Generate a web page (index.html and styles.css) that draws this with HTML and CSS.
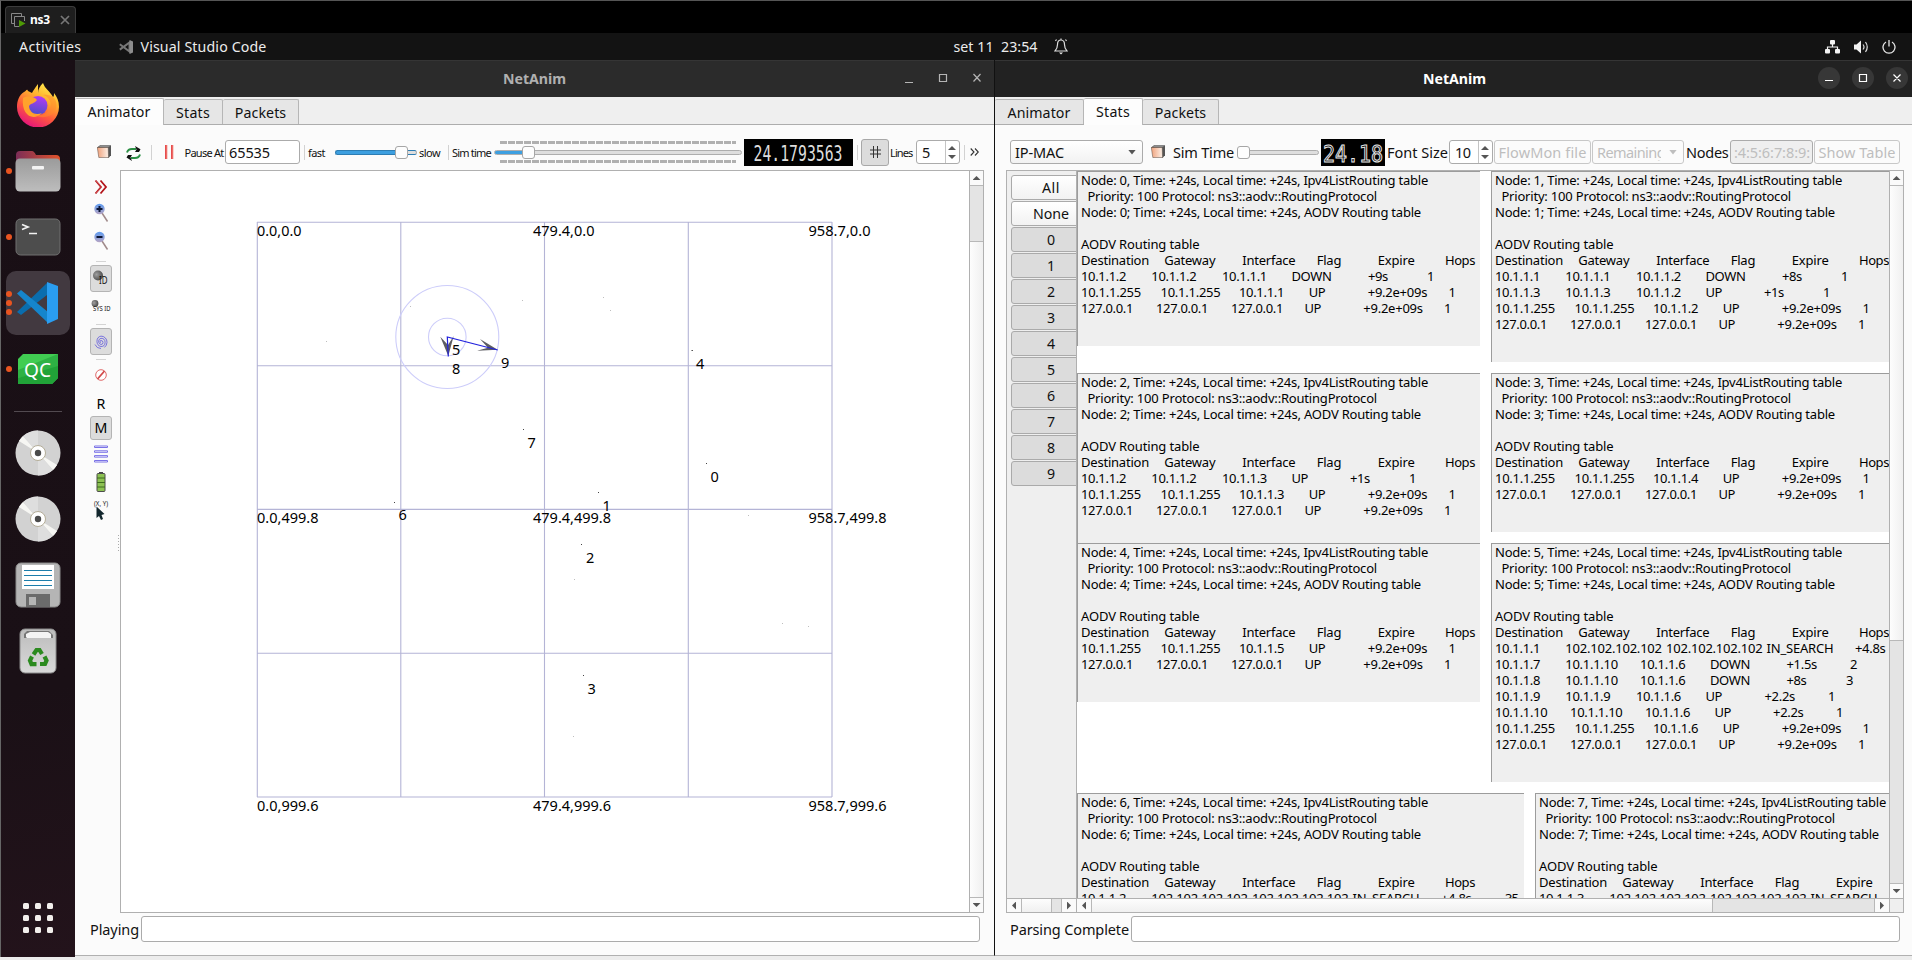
FILE: index.html
```html
<!DOCTYPE html>
<html lang="en">
<head>
<meta charset="utf-8">
<title>ns3</title>
<link rel="stylesheet" href="styles.css">
</head>
<body>
<svg class="defs" width="0" height="0">
  <defs>
    <linearGradient id="ff" x1="0.8" y1="0" x2="0.3" y2="1"><stop offset="0" stop-color="#fff44f"/><stop offset=".35" stop-color="#ffb02e"/><stop offset=".65" stop-color="#ff5a3c"/><stop offset="1" stop-color="#e3127e"/></linearGradient>
    <linearGradient id="ffp" x1="0.6" y1="0" x2="0.4" y2="1"><stop offset="0" stop-color="#b53af5"/><stop offset="1" stop-color="#4a4fc8"/></linearGradient>
    <linearGradient id="fold" x1="0" y1="0" x2="1" y2="0"><stop offset="0" stop-color="#7c2d57"/><stop offset="1" stop-color="#e2532b"/></linearGradient>
    <linearGradient id="grey" x1="0" y1="0" x2="0" y2="1"><stop offset="0" stop-color="#9b9b9b"/><stop offset="1" stop-color="#bdbdbd"/></linearGradient>
    <linearGradient id="bin" x1="0" y1="0" x2="0" y2="1"><stop offset="0" stop-color="#bcbcbc"/><stop offset="1" stop-color="#d9d9d9"/></linearGradient>
    <linearGradient id="peach" x1="0" y1="0" x2="1" y2="0"><stop offset="0" stop-color="#f0a27c"/><stop offset="1" stop-color="#fdf1e8"/></linearGradient>
    <radialGradient id="ball" cx=".35" cy=".4" r=".7"><stop offset="0" stop-color="#a0a0a0"/><stop offset="1" stop-color="#444"/></radialGradient>
    <linearGradient id="lens" x1="0" y1="0" x2="0" y2="1"><stop offset="0" stop-color="#5d9bf0"/><stop offset="1" stop-color="#b5a4c4"/></linearGradient>
    <symbol id="book" viewBox="0 0 14 14"><path d="M0 2.500 3 .3h11v10L11.500 13z" fill="#555"/><path d="M1 2h10.500L14 .5H4z" fill="#8d8d8d"/><path d="M.3 2.500h10.900l.3 10H1.800z" fill="url(#peach)" stroke="#5a4a40" stroke-width=".5"/></symbol>
    <symbol id="disc" viewBox="0 0 46 46"><circle cx="23" cy="23" r="22.500" fill="#d2d2d2"/><path d="M23 23 4 11a22.500 22.500 0 0 1 4-5zM23 23l19 12a22.500 22.500 0 0 1-4 5z" fill="#f6f6f3"/><path d="M23 23 8 6A22.500 22.500 0 0 1 23 .5zM23 23l15 17a22.500 22.500 0 0 1-15 5.500z" fill="#dedede"/><circle cx="23" cy="23" r="7.500" fill="#fff" stroke="#b4ad98"/><circle cx="23" cy="23" r="3.200" fill="#4a4a4a"/></symbol>
  </defs>
</svg>
<div class="screen">
  <header class="vmbar">
    <div class="vmtab">
      <svg width="15" height="15" viewBox="0 0 15 15"><path d="M3.500 10.500H.5V.5h10V3M8 13.500H3.500v-10h10V8" fill="none" stroke="#888"/><path d="M8 7v7l6.500-3.500z" fill="#4e9a06"/></svg>
      <b data-w="20">ns3</b>
      <svg width="10" height="10" viewBox="0 0 10 10"><path d="M1 1l8 8M9 1 1 9" stroke="#777" stroke-width="1.700"/></svg>
    </div>
  </header>
  <nav class="panel">
    <span class="activities" data-w="62.500">Activities</span>
    <svg class="codeicon" width="15" height="14" viewBox="0 0 15 14"><path d="M.8 9.600 10.500 2.500v9L.8 4.200" fill="none" stroke="#777" stroke-width="2"/><path d="M10.500 0 14 1.500v11L10.500 14z" fill="#8d8d8d"/></svg>
    <span class="appname" data-w="126">Visual Studio Code</span>
    <span class="clock" data-w="84">set 11  23:54</span>
    <svg class="bell" width="14" height="17" viewBox="0 0 14 17"><path d="M7 2C4.500 2 3.500 4 3.500 6.500c0 3.500-1 5-2.500 6.500h12c-1.500-1.500-2.500-3-2.500-6.500C10.500 4 9.500 2 7 2zM7 .5V2M1.500 3l1-1.500M12.500 3l-1-1.500" fill="none" stroke="#ddd" stroke-width="1.200"/><path d="M5 14.500h4L7 16.500z" fill="#eee"/></svg>
    <div class="tray">
      <svg width="15" height="14" viewBox="0 0 15 14"><path d="M7.500 4v3M2.500 10V7h10v3" fill="none" stroke="#f2f2f2" stroke-width="1.200"/><rect x="5" y="0" width="5" height="4.500" rx="1" fill="#f2f2f2"/><rect x="0" y="9" width="5" height="4.500" rx="1" fill="#f2f2f2"/><rect x="10" y="9" width="5" height="4.500" rx="1" fill="#f2f2f2"/></svg>
      <svg width="15" height="14" viewBox="0 0 15 14"><path d="M0 4.500h2.500L7 .5v13L2.500 9.500H0z" fill="#f2f2f2"/><path d="M9 4.500q2 2.500 0 5M11.500 2q3.500 5 0 10" fill="none" stroke="#ddd" stroke-width="1.200"/></svg>
      <svg width="14" height="14" viewBox="0 0 14 14"><path d="M4 2a6 6 0 1 0 6 0M7 0v6.500" fill="none" stroke="#e8e8e8" stroke-width="1.300"/></svg>
    </div>
  </nav>
  <main class="desktop">
    <aside class="dock">
      <div class="app"><svg width="44" height="44" viewBox="0 0 44 44"><path d="M22 1C19 5 17 8 16 10l-4-2C11 5 10 8 8 9 3 12 1 18 1 24a21 20.500 0 0 0 42 0c0-6-2-10-5-14 0 2 0 3-1 4C34 8 29 6 27 0c-3 3-5 6-5 10z" fill="url(#ff)"/><circle cx="22" cy="22.500" r="9.500" fill="url(#ffp)"/><path d="M7 15c5-3 12-1 14 2-3 4-6 3-8 6 0 6 6 10 13 7-9 9-21 2-19-15z" fill="#ffa22c"/><path d="M13 23c0 8 9 12 17 7 8-5 5-16-3-18 12-2 16 8 12 16-5 9-24 9-26-5z" fill="#ff8a2e" opacity=".55"/></svg></div>
      <div class="app"><i class="dot"></i><svg width="46" height="42" viewBox="0 0 46 42"><path d="M1 20V5q0-4 4-4h12q2 0 4 4h20q4 0 4 4v12z" fill="url(#fold)"/><rect x=".5" y="8.500" width="45" height="33" rx="4.500" fill="url(#grey)"/><rect x="17" y="16" width="12" height="3.500" rx="1" fill="#f4f4f4"/></svg></div>
      <div class="app"><i class="dot"></i><svg width="46" height="38" viewBox="0 0 46 38"><rect x="1" y="1" width="44" height="36" rx="4.500" fill="#4d4d4d" stroke="#717171"/><path d="M7 6.500 13 9 7 11.500M14 15.500h8" fill="none" stroke="#f2f2f2" stroke-width="1.700"/></svg></div>
      <div class="app active"><i class="dot three"></i><svg width="44" height="44" viewBox="0 0 44 44"><path d="M1 31 31 2v12L5 34z" fill="#0a6dae"/><path d="M1 12.500 5 9l27 22v11z" fill="#1585cc"/><path d="M31 1 42 5v33L31 43z" fill="#2a9df0"/></svg></div>
      <div class="app"><i class="dot"></i><svg width="40" height="30" viewBox="0 0 40 30"><path d="M5 0h35v24l-6 6H0V5z" fill="#41cd52"/><path d="M40 0v14L0 24V16z" fill="#2eb244"/><path d="M0 24 40 12v12l-6 6H0z" fill="#21a338"/><text x="6" y="23" class="qc" textLength="27" lengthAdjust="spacingAndGlyphs">QC</text></svg></div>
      <hr>
      <div class="app"><svg width="46" height="46"><use href="#disc"/></svg></div>
      <div class="app"><svg width="46" height="46"><use href="#disc"/></svg></div>
      <div class="app"><svg width="46" height="46" viewBox="0 0 46 46"><rect x="1" y="1" width="44" height="44" rx="5" fill="#b5b5b5" stroke="#8b8b8b"/><rect x="7" y="3" width="32" height="24" fill="#fff"/><path d="M9 8.500h28M9 13.500h28M9 18.500h28M9 23.500h28" stroke="#1c7dab" stroke-width="1.200"/><rect x="11" y="32" width="24" height="13" fill="#6b6b6b"/><rect x="14" y="35" width="7" height="8" fill="#b5b5b5"/></svg></div>
      <div class="app"><svg width="38" height="46" viewBox="0 0 38 46"><rect x="1" y="1" width="36" height="44" rx="5" fill="url(#bin)" stroke="#8b8b8b"/><path d="M5 10V6l3-3h22l4 4v3z" fill="#777"/><path d="M7 9V6l4-2h18l3 2v4H8z" fill="#f4f4f4"/><g fill="none" stroke="#2b8a1f" stroke-width="4.200"><path d="m14.500 26.500 3-4.500h3l2.500 4M25.500 28.500l2 4-1.500 3.500h-5M17.500 36.200h-5L11 32.500l2-4"/></g></svg></div>
      <div class="grow"></div>
      <div class="apps"><i></i><i></i><i></i><i></i><i></i><i></i><i></i><i></i><i></i></div>
    </aside>

    <section class="win win-left">
      <div class="titlebar"><b data-w="63">NetAnim</b>
        <svg class="ctl" width="76" height="12" viewBox="0 0 76 12"><path d="M1 10.500h8M35.500 2.500h7v7h-7zM69.500 2l7 7.500M76.500 2l-7 7.500" fill="none" stroke="#b5b5b5" stroke-width="1.200"/></svg>
      </div>
      <div class="tabs"><span class="tab on t1"><em data-w="63">Animator</em></span><span class="tab t2"><em data-w="34">Stats</em></span><span class="tab t3"><em data-w="51.500">Packets</em></span></div>
      <div class="toolbar tb-left">
        <svg width="14" height="14"><use href="#book"/></svg>
        <svg class="low" width="15" height="15" viewBox="0 0 15 15"><path d="M1 6.500Q2 3 6 3h4M14 8.500Q13 12 9 12H5" fill="none" stroke="#2c8f45" stroke-width="2"/><path d="M9 0l5.500 3.200L13 6H9l1.500-2.500zM6 15 .5 11.500 2 9h4l-1.500 2.500z" fill="#111"/></svg>
        <i class="sep"></i>
        <svg width="12" height="14" viewBox="0 0 12 14"><path d="M3 0v14M9 0v14" stroke="#e02222" stroke-width="1.600"/><path d="M4 0v14M10 0v14" stroke="#f79a90" stroke-width=".8"/></svg>
        <small data-w="39">Pause At</small>
        <span class="field"><em data-w="41">65535</em></span>
        <i class="sep"></i>
        <small data-w="17">fast</small>
        <div class="slider s1"><b></b><i></i></div>
        <small data-w="21">slow</small>
        <i class="sep"></i>
        <small data-w="39">Sim time</small>
        <div class="slider s2"><b></b><i></i></div>
        <div class="lcd lcd1"><svg width="109" height="27"><text transform="translate(9.500 22) scale(1 1.700)" textLength="89" lengthAdjust="spacingAndGlyphs">24.1793563</text></svg></div>
        <i class="sep"></i>
        <span class="hash"><svg width="11" height="12" viewBox="0 0 11 12"><path d="M3.500 0v12M7.500 0v12M0 4h11M0 8h11" stroke="#333" stroke-width="1"/></svg></span>
        <small data-w="22.500">Lines</small>
        <span class="spin"><em>5</em><u></u></span>
        <i class="sep"></i>
        <svg width="9" height="8" viewBox="0 0 9 8"><path d="M.7.500 4 4 .7 7.500M5 .5 8.300 4 5 7.500" fill="none" stroke="#333" stroke-width="1.100"/></svg>
      </div>
      <div class="viewer">
        <div class="tools">
          <svg class="k1" width="14" height="14" viewBox="0 0 14 14"><path d="M1.500.500 7 7l-5.500 6.500M6.500.5 12 7l-5.500 6.500" fill="none" stroke="#b3141a" stroke-width="1.800"/><path d="M2 1l5.500 6L2 13" fill="none" stroke="#e88" stroke-width=".5"/></svg>
          <svg class="k2" width="16" height="20" viewBox="0 0 16 20"><path d="m9 10 5.500 8.500" stroke="#a08a8a" stroke-width="1.500"/><circle cx="6.500" cy="6" r="5.200" fill="url(#lens)"/><path d="M3.500 6h6M6.500 3v6" stroke="#0b1533" stroke-width="2"/></svg>
          <svg class="k3" width="16" height="20" viewBox="0 0 16 20"><path d="m9 10 5.500 8.500" stroke="#a08a8a" stroke-width="1.500"/><circle cx="6.500" cy="6" r="5.200" fill="url(#lens)"/><path d="M3.500 6h6" stroke="#0b1533" stroke-width="2"/></svg>
          <i class="hs k4"></i>
          <span class="btn k5"><svg width="20" height="20" viewBox="0 0 20 20"><circle cx="7" cy="6.500" r="5" fill="url(#ball)"/><text x="8" y="15" font-size="10" textLength="8.500" lengthAdjust="spacingAndGlyphs">ID</text></svg></span>
          <svg class="k6" width="22" height="20" viewBox="0 0 22 20"><circle cx="5" cy="6.500" r="3.400" fill="url(#ball)"/><text x="3" y="13.500" font-size="7.800" textLength="17.500" lengthAdjust="spacingAndGlyphs">SYS ID</text></svg>
          <i class="hs k7"></i>
          <span class="btn k8"><svg width="14" height="16" viewBox="0 0 14 16"><path d="M7 8.500a1 1 0 0 1 0-2 2 2 0 0 1 0 4 3.200 3.200 0 0 1 0-6.200 4 4 0 0 1 0 8.200 5 5.300 0 0 1 0-10.400 6 6 0 0 1 6 6.300 7 7 0 0 1-2.500 5M1 10.500a6.500 6.500 0 0 0 6 4" fill="none" stroke="#5f58dc" stroke-width=".8"/></svg></span>
          <i class="hs k9"></i>
          <svg class="k10" width="14" height="16" viewBox="0 0 14 16"><circle cx="7" cy="8" r="5.300" fill="#fff" stroke="#e06a6a"/><path d="M3.500 12 10.500 4" stroke="#d24a4a" stroke-width="1.800"/></svg>
          <span class="k11">R</span>
          <span class="btn k12">M</span>
          <svg class="k13" width="14" height="18" viewBox="0 0 14 18"><path d="M.5 1h13v1.500H.5zM.5 5.800h13v1.500H.5zM.5 10.600h13v1.500H.5zM.5 15.500h13V17H.5z" fill="#fff" stroke="#7a72e6"/></svg>
          <svg class="k14" width="10" height="20" viewBox="0 0 10 20"><path d="M3 0h4v2H3z" fill="#444"/><rect x="1" y="1.500" width="8" height="18" rx="1" fill="#8cc152" stroke="#4d4d4d"/><path d="M1 6h8M1 10.500h8M1 15h8" stroke="#3d6b1f"/></svg>
          <svg class="k15" width="18" height="22" viewBox="0 0 18 22"><text x="2" y="7" font-size="7.800" textLength="14" lengthAdjust="spacingAndGlyphs">(X, Y)</text><path d="M4.500 7.500v11.500l2.500-2 2 4 2-1-1.500-4 3-1z" fill="#12262d"/></svg>
        </div>
        <i class="grip"></i>
        <div class="scene">
          <svg width="848" height="741" viewBox="121 171 848 741">
            <path d="M257.300 222V797M400.800 222V797M544.500 222V797M688.300 222V797M832 222V797M257 222.200H832M257 365.800H832M257 509.400H832M257 653.200H832M257 797H832" stroke="#b4b4d6" stroke-width="1.100" fill="none"/>
            <g fill="none" stroke="#cdcdfa" stroke-width="1.100"><circle cx="447.300" cy="337" r="51.500"/><circle cx="447.300" cy="337" r="18.800"/></g>
            <path d="M440.300 336.700 448.300 356 453.700 336 448 345zM480 339l17.700 10.700-20.700 1 11-3z" fill="#5c5c62"/>
            <path d="M497.700 350 447.300 337l1 19.500" fill="none" stroke="#2222dd" stroke-width="1.200"/>
            <g fill="#444"><path d="M691.500 350h1.400v1h-1.400zM523 429h1v1h-1zM706 463h1v1h-1zM598 492h1v1h-1zM394 502h1v1h-1zM581 544h1v1h-1zM583 675h1v1h-1z"/><path opacity=".35" d="M410 306h1v1h-1zM522 300h1v1h-1zM603 297h1v1h-1zM610 310h1v1h-1zM326 341h1v1h-1zM748 515h1v1h-1zM574 579h1v1h-1zM782 623h1v1h-1zM808 626h1v1h-1zM573 736h1v1h-1z"/></g>
            <g class="lbl">
              <text x="257" y="236" textLength="44.500" lengthAdjust="spacingAndGlyphs">0.0,0.0</text><text x="533" y="236" textLength="61.500" lengthAdjust="spacingAndGlyphs">479.4,0.0</text><text x="808.500" y="236" textLength="62" lengthAdjust="spacingAndGlyphs">958.7,0.0</text>
              <text x="257" y="523" textLength="61.500" lengthAdjust="spacingAndGlyphs">0.0,499.8</text><text x="533" y="523" textLength="78" lengthAdjust="spacingAndGlyphs">479.4,499.8</text><text x="808.500" y="523" textLength="78" lengthAdjust="spacingAndGlyphs">958.7,499.8</text>
              <text x="257" y="811" textLength="61.500" lengthAdjust="spacingAndGlyphs">0.0,999.6</text><text x="533" y="811" textLength="78" lengthAdjust="spacingAndGlyphs">479.4,999.6</text><text x="808.500" y="811" textLength="78" lengthAdjust="spacingAndGlyphs">958.7,999.6</text>
              <text x="452" y="355">5</text><text x="452" y="374">8</text><text x="501" y="368">9</text><text x="696" y="369">4</text><text x="527.500" y="448">7</text><text x="710.500" y="482">0</text><text x="602.500" y="511">1</text><text x="398.500" y="520">6</text><text x="586" y="563">2</text><text x="587.500" y="694">3</text>
            </g>
          </svg>
        </div>
        <div class="vbar"><i class="up"></i><div class="groove g56"></div><div class="knob"></div><i class="down"></i></div>
      </div>
      <div class="status"><em data-w="49">Playing</em><span></span></div>
    </section>

    <section class="win win-right">
      <div class="titlebar"><b data-w="63">NetAnim</b>
        <svg class="ctl" width="90" height="22" viewBox="0 0 90 22"><g fill="#373737"><circle cx="11" cy="11" r="11"/><circle cx="45" cy="11" r="11"/><circle cx="79" cy="11" r="11"/></g><path d="M7 13.500h8M41.500 7.500h7v7h-7zM75.500 7.500l7 7M82.500 7.500l-7 7" fill="none" stroke="#fff" stroke-width="1.200"/></svg>
      </div>
      <div class="tabs"><span class="tab t1"><em data-w="63">Animator</em></span><span class="tab on t2"><em data-w="34">Stats</em></span><span class="tab t3"><em data-w="51.500">Packets</em></span></div>
      <div class="toolbar tb-right">
        <span class="combo"><em data-w="49">IP-MAC</em><u></u></span>
        <svg width="14" height="14"><use href="#book"/></svg>
        <em data-w="61">Sim Time</em>
        <div class="slider s3"><b></b><i></i></div>
        <div class="lcd lcd2"><svg width="64" height="27"><text transform="translate(2 23) scale(1 1.800)" textLength="60" lengthAdjust="spacingAndGlyphs">24.18</text></svg></div>
        <em data-w="61">Font Size</em>
        <span class="spin"><em data-w="15.500">10</em><u></u></span>
        <span class="pbtn off"><em data-w="88">FlowMon file</em></span>
        <span class="combo off"><em class="cut"><em data-w="68">Remaining</em></em><u></u></span>
        <em data-w="42.500">Nodes</em>
        <span class="field off"><em data-w="76">:4:5:6:7:8:9:</em></span>
        <span class="pbtn off"><em data-w="77">Show Table</em></span>
      </div>
      <div class="viewer">
        <div class="list">
          <div class="nodes"><span class="n lite"><em data-w="18">All</em></span><span class="n lite"><em data-w="36">None</em></span><span class="n">0</span><span class="n">1</span><span class="n">2</span><span class="n">3</span><span class="n">4</span><span class="n">5</span><span class="n">6</span><span class="n">7</span><span class="n">8</span><span class="n">9</span></div>
          <div class="hbar"><i class="lt"></i><div class="knob"></div><div class="groove g10"></div><i class="rt"></i></div>
        </div>
        <div class="stats">
          <div class="sheet">
            <div class="col c1" id="col-a"></div>
            <div class="col c2" id="col-b"></div>
          </div>
          <div class="hbar"><i class="lt"></i><div class="knob"></div><div class="groove g163"></div><i class="rt"></i></div>
        </div>
        <div class="vside">
          <div class="vbar"><i class="up"></i><div class="knob"></div><div class="groove g243"></div><i class="down"></i></div>
          <div class="corner"></div>
        </div>
      </div>
      <div class="status"><em data-w="119">Parsing Complete</em><span></span></div>
    </section>
  </main>
</div>
<script src="main.js"></script>
</body>
</html>
```

FILE: styles.css
```css
* { box-sizing: border-box; }
body { margin: 0; width: 1912px; height: 960px; overflow: hidden; background: #ececec; font: 14.2px/18px "Noto Sans", "Open Sans", sans-serif; color: #111; }
em { font-style: normal; white-space: pre; }
svg { display: block; }
small { font-size: 11px; white-space: pre; position: relative; top: 1px; }
.defs { position: absolute; }
.screen { width: 1912px; height: 957px; display: flex; flex-direction: column; border-top: 1px solid #555; border-left: 1px solid #666; }
.vmbar { height: 32px; background: #000; padding: 5px 0 0 4px; flex: none; }
.vmtab { width: 71px; height: 27px; background: #1e1e1e; border: 1px solid #3c3c3c; border-bottom: 0; border-radius: 4px 4px 0 0; display: flex; align-items: center; padding: 0 5px; color: #fff; }
.vmtab b { font-size: 12px; margin: 0 10px 0 4px; white-space: pre; }
.panel { height: 27px; background: #131313; color: #ececec; display: flex; align-items: center; flex: none; white-space: pre; }
.activities { margin-left: 18px; }
.codeicon { margin: 0 7px 0 37px; }
.clock { margin-left: 687px; }
.bell { margin-left: 17px; }
.tray { margin-left: auto; margin-right: 16px; display: flex; gap: 13.5px; }
.desktop { flex: 1; display: flex; min-height: 0; }

.dock { width: 74px; background: linear-gradient(170deg, #190f15, #1a1016 70%, #23131b); display: flex; flex-direction: column; padding-top: 13px; align-items: center; flex: none; }
.app { width: 64px; height: 64px; margin: 0 0 2px 0; display: flex; align-items: center; justify-content: center; position: relative; border-radius: 10px; flex: none; }
.app.active { background: #423940; }
.dot { position: absolute; left: 0; top: 29px; width: 6px; height: 6px; border-radius: 3px; background: #e95420; }
.dot.three { top: 20px; box-shadow: 0 9px 0 #e95420, 0 18px 0 #e95420; }
.dock hr { width: 48px; height: 1px; border: 0; background: #524a50; margin: 8px 0 9px; flex: none; }
.qc { font: 19px "Noto Sans", sans-serif; fill: #fff; }
.grow { flex: 1; }
.apps { display: grid; grid-template-columns: repeat(3, 6px); gap: 6px; margin-bottom: 24px; }
.apps i { width: 6px; height: 6px; border-radius: 1.500px; background: #f2efec; }

.win { display: flex; flex-direction: column; background: #fbfbfb; flex: none; min-height: 0; border-bottom: 1px solid #b0b0b0; margin-bottom: 1px; }
.win-left { width: 919px; }
.win-right { width: 918px; border-left: 1px solid #111; }
.titlebar { height: 37px; flex: none; background: #2b2b2b; border-top: 1px solid #353535; display: flex; align-items: center; justify-content: flex-end; color: #b0b0b0; }
.titlebar b { white-space: pre; }
.win-left .titlebar b { margin-right: 338px; }
.win-left .ctl { margin-right: 14px; margin-bottom: 2px; overflow: visible; }
.win-right .titlebar { background: #222; color: #fff; }
.win-right .titlebar b { margin-right: 332px; }
.win-right .ctl { margin-right: 4px; margin-bottom: 2px; }

.tabs { height: 28px; flex: none; background: #efefef; border-bottom: 1px solid #adadad; display: flex; align-items: flex-end; }
.tab { height: 25px; background: #e6e6e6; border: 1px solid #b6b6b6; border-left: 0; border-bottom: 0; border-radius: 2px 2px 0 0; padding-top: 1px; display: flex; align-items: center; justify-content: center; }
.tab.on { height: 27px; margin-bottom: -1px; background: #fdfdfd; padding: 0 0 1px; }
.t1 { width: 89px; }
.t2 { width: 59px; }
.t3 { width: 76px; }

.toolbar { height: 45px; flex: none; padding-top: 9px; display: grid; align-items: center; font-size: 14.5px; }
.tb-left { padding-left: 22px; grid-template-columns: 29px 25px 12px 21.500px 40.500px 79px 4px 27px 84px 29px 4px 42px 250px 113px 4px 29px 26px 48px 6px 14px; }
.tb-right { padding-left: 15px; grid-template-columns: 141px 22px 64px 84px 66px 62px 45px 98px 94px 44px 84px 86px; }
.low { position: relative; top: 1px; }
.sep { width: 1px; height: 15px; background: #d2d2d2; }
.field, .spin, .combo, .pbtn { height: 24px; border: 1px solid #ababab; border-radius: 3px; background: #fff; display: flex; align-items: center; overflow: hidden; }
.field { width: 75px; padding-left: 3px; }
.spin { width: 44px; padding-left: 5px; position: relative; }
.spin::after { content: ""; position: absolute; right: 13px; top: 0; bottom: 0; border-left: 1px solid #c4c4c4; }
.spin u { position: absolute; right: 3px; top: 5px; width: 8px; height: 13px; background: linear-gradient(#555, #555); clip-path: polygon(50% 0, 100% 31%, 0 31%, 0 69%, 100% 69%, 50% 100%, 0 69%, 0 31%); }
.combo { width: 133px; padding: 0 6px 0 4px; justify-content: space-between; background: linear-gradient(#fff, #f2f2f2); }
.combo u { width: 8px; height: 5px; background: #555; clip-path: polygon(0 0, 100% 0, 50% 100%); flex: none; }
.pbtn { justify-content: center; background: #fbfbfb; width: 97px; }
.pbtn:last-child { width: 86px; }
.off { color: #bebebe; border-color: #c8c8c8; }
.combo.off { width: 92px; background: #fbfbfb; }
.combo.off u { background: #bebebe; }
.cut { width: 64px; overflow: hidden; }
.field.off { width: 83px; background: #efefef; border-color: #ababab; }
.slider { position: relative; height: 27px; }
.slider b { position: absolute; left: 0; right: 0; top: 11px; height: 5px; border: 1px solid #adadad; border-radius: 3px; background: #dedede; }
.slider i { position: absolute; top: 7px; width: 13px; height: 13px; border: 1px solid #a6a6a6; border-radius: 3px; background: #fdfdfd; }
.s1 { width: 82px; }
.s1 i { left: 60px; }
.s1 b { background: linear-gradient(90deg, #3d9fe0 62px, #dedede 62px); border-color: #2d7db3; border-right-color: #adadad; }
.s2 { width: 248px; background: repeating-linear-gradient(90deg, #b0b0b0 0 7px, transparent 7px 8px) 6px 2px / 236px 3px no-repeat, repeating-linear-gradient(90deg, #b0b0b0 0 7px, transparent 7px 8px) 6px 21px / 236px 3px no-repeat; }
.s2 i { left: 28px; }
.s2 b { background: linear-gradient(90deg, #3d9fe0 30px, #dedede 30px); }
.s3 { width: 82px; }
.s3 i { left: 0; }
.lcd { height: 27px; background: #000; }
.lcd text { font: 13px "DejaVu Sans Mono", monospace; fill: #000; stroke: #e8e8e8; stroke-width: .6px; }
.lcd1 { width: 109px; }
.lcd1 text { fill: #ddd; font-size: 12px; stroke-width: 0; }
.lcd2 { width: 64px; }
.hash { width: 28px; height: 27px; border: 1px solid #a8a8a8; border-radius: 3px; background: #dcdcdc; display: flex; align-items: center; justify-content: center; }

.viewer { flex: none; height: 743px; display: flex; }
.tools { width: 37px; flex: none; padding: 1px 0 0 15px; display: flex; flex-direction: column; align-items: center; }
.tools svg { flex: none; overflow: visible; }
.tools text { font-family: "Noto Sans", sans-serif; fill: #111; }
.k1 { margin: 9px 0; }
.k3 { margin-top: 8px; }
.hs { width: 10px; height: 1px; background: #d4d4d4; flex: none; }
.btn { width: 22px; background: #dcdcdc; border: 1px solid #b4b4b4; border-radius: 3px; display: flex; align-items: center; justify-content: center; flex: none; }
.k4 { margin-top: 10px; }
.k5 { margin-top: 3px; height: 27px; }
.k6 { margin-top: 5px; }
.k7 { margin-top: 7px; }
.k8 { margin-top: 3px; height: 27px; }
.k9 { margin-top: 4px; }
.k10 { margin-top: 7px; }
.k11 { margin-top: 13px; line-height: 16px; color: #000; }
.k12 { margin-top: 4px; height: 24px; color: #000; }
.k13 { margin-top: 5px; }
.k14 { margin-top: 9px; }
.k15 { margin-top: 7px; }
.grip { width: 8px; flex: none; height: 16px; margin-top: 365px; background: repeating-linear-gradient(#aaa 0 1px, transparent 1px 3px) 6px 0 / 1px 16px no-repeat; }
.scene { width: 849px; height: 743px; border: 1px solid #b0b0b0; border-right: 0; background: #fff; flex: none; }
.lbl text { font: 14.500px "Noto Sans", sans-serif; fill: #000; }
.vbar { width: 15px; height: 743px; border: 1px solid #b0b0b0; display: flex; flex-direction: column; background: #e4e4e4; }
.vbar .knob { flex: 1; background: linear-gradient(90deg, #fdfdfd, #f0f0f0); border: solid #b8b8b8; border-width: 1px 0; }
.vbar .up, .vbar .down { height: 14px; background: #fafafa; display: flex; align-items: center; justify-content: center; flex: none; }
.up::after, .down::after { content: ""; width: 8px; height: 4px; background: #555; clip-path: polygon(50% 0, 100% 100%, 0 100%); }
.down::after { clip-path: polygon(0 0, 100% 0, 50% 100%); }
.g56 { height: 56px; border-top: 1px solid #b8b8b8; }
.g243 { height: 243px; border-bottom: 1px solid #b8b8b8; }

.list { width: 71px; margin-left: 11px; border: 1px solid #b0b0b0; border-bottom: 0; background: #efefef; display: flex; flex-direction: column; flex: none; }
.nodes { flex: 1; padding: 4px 0 0 4px; display: flex; flex-direction: column; gap: 1px; overflow: hidden; }
.n { width: 80px; height: 25px; border: 1px solid #aaa; border-radius: 3px; background: #dcdcdc; display: flex; align-items: center; justify-content: center; flex: none; }
.lite { background: linear-gradient(#fff, #f2f2f2); }
.hbar { height: 15px; flex: none; border: solid #b0b0b0; border-width: 1px 0; display: flex; background: #e4e4e4; }
.hbar .knob { flex: 1; background: linear-gradient(#fdfdfd, #f0f0f0); border: solid #b8b8b8; border-width: 0 1px; }
.lt, .rt { width: 14px; background: #fafafa; display: flex; align-items: center; justify-content: center; flex: none; }
.lt::after, .rt::after { content: ""; width: 4px; height: 8px; background: #555; clip-path: polygon(100% 0, 100% 100%, 0 50%); }
.rt::after { clip-path: polygon(0 0, 100% 50%, 0 100%); }
.g10 { width: 10px; border-right: 1px solid #b8b8b8; }
.g163 { width: 162px; border-right: 1px solid #b8b8b8; }
.stats { width: 812px; display: flex; flex-direction: column; border-top: 1px solid #b0b0b0; flex: none; }
.sheet { flex: 1; display: flex; overflow: hidden; background: #fff; min-height: 0; }
.col { flex: none; }
.c1 { width: 447px; }
.c1 .pane { width: 403px; }
.c1 .pane.wide { width: 447px; }
.c2 { margin-left: -33px; }
.c2 .pane { width: 420px; }
.c2 .pane.wide { margin-left: 44px; }
.pane { background: #efefef; border: solid #9c9c9c; border-width: 1px 0 0 1px; padding: 0 0 0 3px; font-size: 13px; line-height: 16px; overflow: hidden; color: #000; }
.row { height: 16px; white-space: pre; display: flex; }
.row span { flex: none; }
.vside { width: 15px; }
.vside .vbar { height: 729px; }
.corner { height: 14px; border: solid #b0b0b0; border-width: 0 1px 1px; background: #efefef; }
.status { flex: 1; display: flex; align-items: center; padding: 0 15px 10px; gap: 2px; font-size: 14.5px; }
.win-left .status { padding-right: 14px; }
.win-right .status { padding-right: 12px; }
.status span { flex: 1; height: 26px; border: 1px solid #ababab; border-radius: 3px; background: #fff; }
```

FILE: main.js
```js
// Column starts and text widths, in pixels, of each kind of routing row.
const HEAD = [[0, 68], [83.3, 51], [161.3, 53], [235.7, 24.5], [296.7, 37], [364, 30]];
const HEADINGS = ['Destination', 'Gateway', 'Interface', 'Flag', 'Expire', 'Hops'];
const SHORT_DOWN = [[0, 45], [70.3, 45], [141, 45], [210.5, 40], [287, 20], [346, 6]];
const SHORT_UP = [[0, 45], [70.3, 45], [141, 45], [210.5, 16.5], [269, 20], [328, 6]];
const SHORT_UP2 = [[0, 45], [70.3, 45], [141, 45], [210.5, 16.5], [269.5, 30.5], [333, 6]];
const BCAST = [[0, 60], [79.5, 60], [158, 45], [227.8, 16.5], [286.7, 59.5], [367.5, 6]];
const LOOP = [[0, 52], [75, 52], [150, 52], [223.5, 16.5], [282.3, 59.5], [363, 6]];
const SEARCH = [[0, 45], [70.3, 96.5], [171, 96.5], [271.5, 67], [360, 30.5], [424, 13]];
const TEN_DOWN = [[0, 45], [70.3, 52.5], [145, 45.5], [215, 40], [291.5, 30.5], [355, 7]];
const TEN_DOWN2 = [[0, 45], [70.3, 52.5], [145, 45.5], [215, 40], [291.5, 20], [351, 7]];
const TEN_UP = [[0, 52.5], [75, 52.5], [150, 45], [219.5, 16.5], [278, 30.5], [341, 6]];
const W = '102.102.102.102';
const bc = n => [BCAST, '10.1.1.255', '10.1.1.255', '10.1.1.' + n, 'UP', '+9.2e+09s', '1'];
const lo = [LOOP, '127.0.0.1', '127.0.0.1', '127.0.0.1', 'UP', '+9.2e+09s', '1'];

// Each table: node number, its height, the gap below it, its rows.
const tables = {
  'col-a': [
    [0, 175, 27, [[SHORT_DOWN, '10.1.1.2', '10.1.1.2', '10.1.1.1', 'DOWN', '+9s', '1'], bc(1), lo]],
    [2, 170, 0, [[SHORT_UP, '10.1.1.2', '10.1.1.2', '10.1.1.3', 'UP', '+1s', '1'], bc(3), lo]],
    [4, 159, 91, [bc(5), lo]],
    [6, 200, 0, [[SEARCH, '10.1.1.2', W, W, 'IN_SEARCH', '+4.8s', '35']]]
  ],
  'col-b': [
    [1, 191, 11, [[SHORT_DOWN, '10.1.1.1', '10.1.1.1', '10.1.1.2', 'DOWN', '+8s', '1'], [SHORT_UP, '10.1.1.3', '10.1.1.3', '10.1.1.2', 'UP', '+1s', '1'], bc(2), lo]],
    [3, 159, 11, [bc(4), lo]],
    [5, 239, 11, [
      [SEARCH, '10.1.1.1', W, W, 'IN_SEARCH', '+4.8s', ''],
      [TEN_DOWN, '10.1.1.7', '10.1.1.10', '10.1.1.6', 'DOWN', '+1.5s', '2'],
      [TEN_DOWN2, '10.1.1.8', '10.1.1.10', '10.1.1.6', 'DOWN', '+8s', '3'],
      [SHORT_UP2, '10.1.1.9', '10.1.1.9', '10.1.1.6', 'UP', '+2.2s', '1'],
      [TEN_UP, '10.1.1.10', '10.1.1.10', '10.1.1.6', 'UP', '+2.2s', '1'],
      bc(6), lo]],
    [7, 200, 0, [[SEARCH, '10.1.1.3', W, W, 'IN_SEARCH', '', '']]]
  ]
};

function line(layout, texts) {
  const cells = texts.map((t, i) => {
    const next = layout[i + 1];
    const width = next ? next[0] - layout[i][0] : 30;
    return `<span style="width:${width}px"><em data-w="${layout[i][1]}">${t}</em></span>`;
  });
  return `<div class="row">${cells.join('')}</div>`;
}

for (const [id, list] of Object.entries(tables)) {
  document.getElementById(id).innerHTML = list.map(([n, h, gap, rows]) =>
    `<div class="pane${n > 5 ? ' wide' : ''}" style="height:${h}px;margin-bottom:${gap}px">` +
    line([[0, 347]], [`Node: ${n}, Time: +24s, Local time: +24s, Ipv4ListRouting table`]) +
    line([[0, 296]], ['  Priority: 100 Protocol: ns3::aodv::RoutingProtocol']) +
    line([[0, 340]], [`Node: ${n}; Time: +24s, Local time: +24s, AODV Routing table`]) +
    '<div class="row"></div>' +
    line([[0, 118.5]], ['AODV Routing table']) +
    line(HEAD, n === 7 ? HEADINGS.slice(0, 5) : HEADINGS) +
    rows.map(([layout, ...t]) => line(layout, t)).join('') + '</div>').join('');
}

// Tracks each label so that it fills its nominal width.
for (const el of document.querySelectorAll('[data-w]')) {
  const n = el.textContent.length;
  if (!n) continue;
  const range = document.createRange();
  range.selectNodeContents(el);
  const spare = parseFloat(el.dataset.w) - range.getBoundingClientRect().width;
  el.style.letterSpacing = (spare / n).toFixed(3) + 'px';
}
```
